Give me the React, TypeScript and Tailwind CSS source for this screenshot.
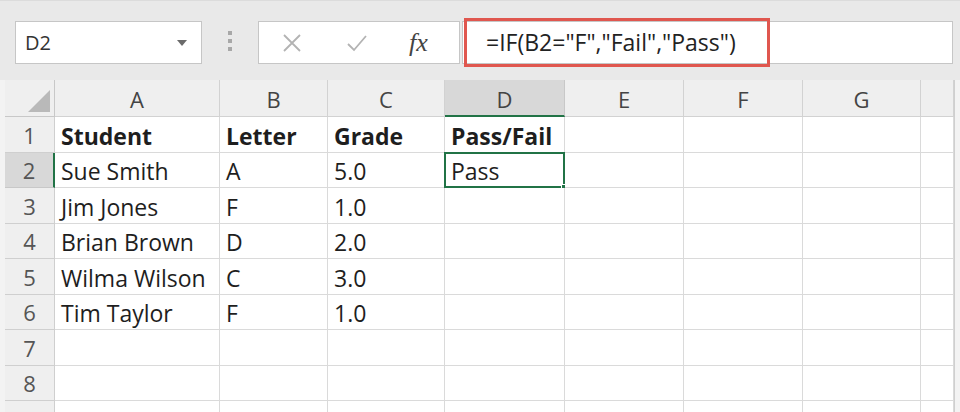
const COLS = ["A", "B", "C", "D", "E", "F", "G", ""];

const ROWS: string[][] = [
  ["Student", "Letter", "Grade", "Pass/Fail"],
  ["Sue Smith", "A", "5.0", "Pass"],
  ["Jim Jones", "F", "1.0"],
  ["Brian Brown", "D", "2.0"],
  ["Wilma Wilson", "C", "3.0"],
  ["Tim Taylor", "F", "1.0"],
  [],
  [],
  [],
];

const font = { fontFamily: '"Open Sans", "Noto Sans", sans-serif' };

function FormulaBar() {
  return (
    <div className="flex h-[80px] items-start bg-[#e9e9e9] pt-[20px] pl-[15px] pr-[7px] border-t border-[#dcdcdc]">
      {/* name box */}
      <div className="flex h-[43px] w-[187px] items-center justify-between border border-[#c6c6c6] bg-white pl-[9px] pr-[14px]">
        <span className="text-[20px] text-[#333]">D2</span>
        <svg width="10" height="6" viewBox="0 0 10 6">
          <path d="M0 0h10L5 6z" fill="#6b6b6b" />
        </svg>
      </div>

      {/* grip dots */}
      <div className="flex w-[56px] flex-col items-center gap-[4px] pt-[10px]">
        <span className="h-[4px] w-[4px] bg-[#a8a8a8]" />
        <span className="h-[4px] w-[4px] bg-[#a8a8a8]" />
        <span className="h-[4px] w-[4px] bg-[#a8a8a8]" />
      </div>

      {/* cancel / enter / fx */}
      <div className="flex h-[43px] w-[202px] items-center border border-[#c6c6c6] bg-white">
        <svg width="22" height="22" viewBox="0 0 22 22" className="ml-[22px]">
          <path d="M3 3l16 16M19 3L3 19" stroke="#b3b3b3" strokeWidth="1.8" />
        </svg>
        <svg width="24" height="22" viewBox="0 0 24 22" className="ml-[42px]">
          <path d="M3 12l6 6L21 4" stroke="#b3b3b3" strokeWidth="1.8" fill="none" />
        </svg>
        <span
          className="ml-[40px] text-[26px] italic text-[#444]"
          style={{ fontFamily: '"Liberation Serif", "DejaVu Serif", serif' }}
        >
          fx
        </span>
      </div>

      {/* formula input */}
      <div className="relative ml-[2px] flex h-[43px] flex-1 items-center border border-[#c6c6c6] bg-white pl-[23px]">
        <span className="text-[23px] text-[#222]">=IF(B2="F","Fail","Pass")</span>
        <div className="absolute left-[1px] top-[-4px] h-[49px] w-[306px] border-[3px] border-[#e0574f]" />
      </div>
    </div>
  );
}

function Row({ index, cells }: { index: number; cells: string[] }) {
  const active = index === 2;
  return (
    <>
      <div
        className={
          active
            ? "flex h-[35.5px] items-center justify-center border-b border-r-2 border-b-[#c8c8c8] border-r-[#217346] bg-[#d8d8d8] pt-[2px] text-[22px] text-[#555]"
            : "flex h-[35.5px] items-center justify-center border-r border-b border-[#cfcfcf] bg-[#efefef] pt-[2px] text-[22px] text-[#555]"
        }
      >
        {index}
      </div>
      {COLS.map((_, c) => (
        <div
          key={c}
          className={
            "relative flex h-[35.5px] items-center border-r border-b border-[#dadada] bg-white pl-[6px] pt-[3px] text-[23px] text-[#1e1e1e] whitespace-nowrap " +
            (index === 1 ? "font-bold" : "")
          }
        >
          {cells[c] ?? ""}
          {active && c === 3 && (
            <div className="absolute left-[-1px] top-[-1px] right-[-1px] bottom-[-1px] border-2 border-[#217346]">
              <span className="absolute right-[-5px] bottom-[-5px] h-[7px] w-[7px] border border-white bg-[#217346]" />
            </div>
          )}
        </div>
      ))}
    </>
  );
}

function Sheet() {
  return (
    <div className="flex bg-[#f3f3f3] pl-[5px]">
      <div className="grid grid-cols-[50px_165px_108px_117px_120px_119px_119px_118px_33px] border-r border-[#cfcfcf]">
        {/* corner */}
        <div className="relative h-[37px] border-r border-b border-[#c8c8c8] bg-[#efefef]">
          <svg width="22" height="22" viewBox="0 0 22 22" className="absolute right-[4px] bottom-[4px]">
            <path d="M22 0v22H0z" fill="#b9b9b9" />
          </svg>
        </div>
        {COLS.map((c, i) => (
          <div
            key={i}
            className={
              i === 3
                ? "flex h-[37px] items-center justify-center border-r border-b-2 border-r-[#c8c8c8] border-b-[#217346] bg-[#d8d8d8] pt-[3px] text-[22px] text-[#444]"
                : "flex h-[37px] items-center justify-center border-r border-b border-[#d2d2d2] bg-[#efefef] pt-[3px] text-[22px] text-[#444]"
            }
          >
            {c}
          </div>
        ))}

        {ROWS.map((row, r) => (
          <Row key={r} index={r + 1} cells={row} />
        ))}
      </div>
    </div>
  );
}

export default function App() {
  return (
    <div className="h-[412px] w-[960px] overflow-hidden bg-[#f3f3f3]" style={font}>
      <FormulaBar />
      <Sheet />
    </div>
  );
}
